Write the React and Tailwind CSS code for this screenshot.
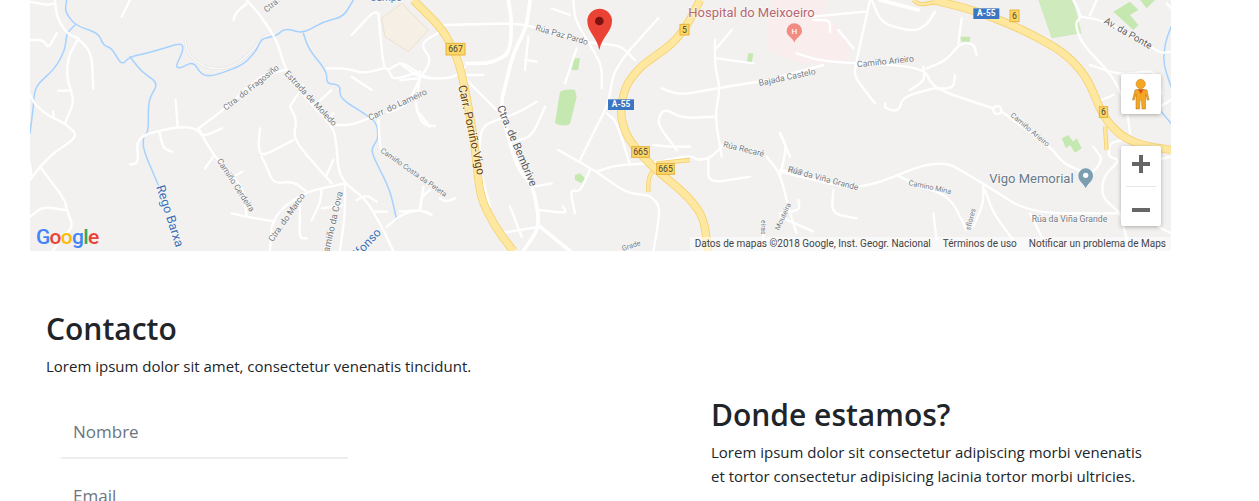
import React from "react";

// map is drawn in 3x units, one group per strip of the picture
const roads1 = [
  "M650 0 L690 45 L740 120 L765 205 L830 300 L910 380 L920 440 L925 510 L945 550 L1010 600 L1060 690 L1090 753",
  "M1045 40 L1060 200 L1075 210 L1115 185 L1165 220 L1200 235",
  "M890 205 L950 205 L1000 220 L1060 205",
  "M1075 210 L1090 240 L1170 215",
  "M965 230 L1025 270",
  "M1045 40 L1030 35 L965 105",
  "M915 375 L965 375 L1030 350 L1130 320 L1170 235",
  "M1045 360 L1050 445 L1060 450",
  "M1160 330 L1200 380",
  "M505 385 L580 330 L650 265 L700 225 L765 210",
  "M300 493 L325 490 L320 410 L440 380 L505 385 L550 465 L610 530 L640 570 L650 650",
  "M437 300 L443 380",
  "M388 395 L400 445 L425 455",
  "M505 385 L520 410 L575 385",
  "M550 470 L525 505",
  "M610 530 L637 515",
  "M605 640 L650 650 L735 665",
  "M720 753 L725 670 L760 620 L830 575 L945 550",
  "M780 320 L820 255",
  "M780 320 L800 360 L790 420 L905 550",
  "M790 420 L695 470 L685 440 L690 385",
  "M695 470 L710 500 L730 550 L790 545 L830 575",
  "M910 480 L890 525",
  "M905 270 L860 310",
  "M910 340 L890 360",
  "M810 615 L808 715 L830 715",
  "M875 570 L870 610 L845 660",
  "M945 550 L945 640 L930 753",
  "M875 625 L940 615",
  "M980 600 L1010 585 L1040 605",
  "M1030 635 L1070 635",
  "M1070 680 L1120 640 L1170 630 L1200 640",
  "M1170 630 L1175 590 L1200 570",
  "M75 0 L80 50 L110 100 L145 115 L185 160 L190 265",
  "M145 115 L115 170 L110 230 L125 280 L130 310 L105 370",
  "M85 272 L125 272",
  "M0 120 L40 120 L55 145 L80 100",
  "M0 285 L20 320 L60 350 L105 370 L145 408 L70 460 L30 500 L0 540",
  "M70 335 L70 350",
  "M30 500 L105 600 L110 630 L130 680 L90 720 L70 750",
  "M0 650 L40 620 L105 630",
  "M0 490 L5 530",
  "M0 5 L50 15 L75 10",
  "M300 0 L275 50",
  "M650 10 L620 35 L610 60",
];

const rivers1 = [
  "M110 0 L105 35 L135 75 L205 100 L220 135 L245 145 L275 195 L300 170 L370 155 L455 128 L460 150 L437 200 L450 205 L490 185 L515 225 L550 228 L640 195 L680 150 L695 115 L735 110 L765 85 L820 100 L880 65 L940 50 L970 0",
  "M135 75 L110 100 L105 150 L75 205 L15 260 L10 320 L0 400",
  "M300 170 L335 215 L385 250 L355 300 L355 395 L340 410 L340 450 L385 555",
  "M820 100 L835 145 L890 215 L890 250 L930 255 L930 295 L1010 345 L1040 370 L1045 415 L1025 445 L1030 470 L1080 570 L1100 660",
];

const roads2 = [
  "M130 75 L340 70 L400 80 L570 130 L660 135 L705 180",
  "M775 55 L680 160 L640 220 L625 310 L580 400 L540 480",
  "M620 340 L650 365 L690 495",
  "M475 450 L590 515 L680 580 L750 585 L780 620 L770 700 L760 753",
  "M590 515 L650 495 L760 490 L870 465 L890 480 L930 475 L970 435",
  "M570 510 L540 575 L510 570 L525 640",
  "M760 435 L810 440 L870 440",
  "M520 0 L525 60 L580 150 L605 200 L605 265",
  "M455 25 L510 45",
  "M530 145 L495 250",
  "M410 305 L350 340 L260 370 L240 400 L240 510 L270 620",
  "M435 320 L395 410 L340 425",
  "M200 240 L290 330",
  "M200 225 L250 225",
  "M375 210 L385 110",
  "M375 180 L410 185",
  "M0 190 L60 235 L160 235 L195 200",
  "M0 240 L60 235",
  "M60 235 L45 320 L70 375 L105 378",
  "M130 90 L60 130 L95 180 L60 235",
  "M60 630 L70 560",
  "M0 635 L60 630 L95 645",
  "M120 595 L140 605 L165 595",
  "M330 620 L365 710",
  "M300 700 L420 680",
  "M420 630 L500 640 L490 620",
  "M400 560 L455 550",
  "M785 265 L840 285 L950 265 L1200 225",
  "M945 120 L945 200 L960 265 L945 350 L965 470",
  "M995 90 L945 150",
  "M950 175 L1060 190",
  "M945 350 L850 355 L790 325 L770 370 L830 450",
  "M1140 400 L1170 470",
  "M1100 470 L1140 520 L1170 640 L1190 700",
  "M925 480 L925 550 L1050 530",
  "M1140 510 L1200 520",
  "M1085 660 L1095 753",
  "M1000 445 L970 435",
];

const thick2 = [
  "M325 0 L335 60 L330 160 L270 190 L200 190",
  "M390 0 L380 80 L340 160 L320 240 L300 320 L350 500 L400 560 L420 680 L370 753",
  "M420 680 L510 753",
];

const roads3 = [
  "M270 0 L230 180 L222 230 L285 310",
  "M275 0 L305 70 L400 95 L440 75 L465 35",
  "M100 50 L255 35",
  "M100 60 L150 60 L150 95",
  "M175 90 L220 145",
  "M50 160 L130 185 L430 200 L460 265 L640 325",
  "M130 195 L0 230",
  "M440 205 L500 180 L540 130 L580 130 L590 165",
  "M545 55 L535 130",
  "M430 200 L435 240 L390 270",
  "M525 225 L520 265 L460 265",
  "M460 265 L370 290 L355 335 L315 325 L315 310",
  "M665 335 L810 440 L850 490 L920 520",
  "M0 400 L20 440 L0 530",
  "M0 515 L100 540 L240 570 L480 475 L600 545 L750 640 L1020 640",
  "M350 525 L400 550 L510 590 L560 690",
  "M610 555 L610 610 L580 680",
  "M615 570 L640 640 L700 720",
  "M160 570 L155 640 L230 655",
  "M0 640 L60 630 L55 600",
  "M0 650 L100 695",
  "M460 640 L470 720",
  "M750 640 L790 720",
  "M880 0 L905 50 L885 70 L905 130 L1000 230 L1040 320 L1050 400",
  "M905 50 L960 60 L1080 115 L1140 160 L1173 155",
  "M930 195 L1020 225 L1130 210 L1145 280",
  "M965 300 L1000 285",
  "M940 440 L970 480 L925 530",
  "M1025 420 L990 430 L985 470 L1020 480 L970 530 L965 590 L1020 640",
  "M1020 640 L1050 753",
  "M1130 480 L1173 470",
  "M1173 300 L1140 320",
  "M1135 680 L1173 700",
  "M950 0 L930 45",
  "M1160 10 L1173 25",
];

// rounds the corners of a polyline, so roads don't look like they were ruled
const smooth = (d) => {
  const n = d.match(/-?\d+(\.\d+)?/g).map(Number);
  const pts = [];
  for (let i = 0; i < n.length; i += 2) pts.push([n[i], n[i + 1]]);
  let out = `M${pts[0][0]} ${pts[0][1]}`;
  for (let i = 1; i < pts.length - 1; i++) {
    const [px, py] = pts[i - 1];
    const [x, y] = pts[i];
    const [nx, ny] = pts[i + 1];
    const ax = x + (px - x) * 0.4;
    const ay = y + (py - y) * 0.4;
    const bx = x + (nx - x) * 0.4;
    const by = y + (ny - y) * 0.4;
    out += ` L${ax} ${ay} Q${x} ${y} ${bx} ${by}`;
  }
  const last = pts[pts.length - 1];
  return `${out} L${last[0]} ${last[1]}`;
};

const Lines = ({ items, color = "#fff", width = 7 }) => (
  <g fill="none" stroke={color} strokeWidth={width} strokeLinecap="round" strokeLinejoin="round">
    {items.map((d) => (
      <path key={d} d={smooth(d)} />
    ))}
  </g>
);

// yellow main road, outline first and then the fill
const Motorway = ({ d, width = 20 }) => (
  <g fill="none" strokeLinejoin="round">
    <path d={smooth(d)} stroke="#f6d06f" strokeWidth={width + 5} />
    <path d={smooth(d)} stroke="#fee8a0" strokeWidth={width} />
  </g>
);

const Label = ({ x, y, angle = 0, size = 25, color = "#757a80", weight = 400, children }) => (
  <text
    x={x}
    y={y}
    transform={`rotate(${angle} ${x} ${y})`}
    fontSize={size}
    fill={color}
    fontWeight={weight}
    fontFamily="Roboto, sans-serif"
    stroke="#fff"
    strokeOpacity="0.6"
    strokeWidth="4"
    paintOrder="stroke"
  >
    {children}
  </text>
);

const Shield = ({ x, y, w, h, children }) => (
  <g>
    <rect x={x} y={y} width={w} height={h} fill="#fdd663" stroke="#e3b23c" strokeWidth="3" />
    <text x={x + w / 2} y={y + h / 2 + 9} textAnchor="middle" fontSize="26" fill="#444" fontFamily="Roboto, sans-serif">
      {children}
    </text>
  </g>
);

const BlueShield = ({ x, y }) => (
  <g>
    <rect x={x} y={y} width="78" height="32" fill="#3a76c4" />
    <text x={x + 39} y={y + 24} textAnchor="middle" fontSize="25" fontWeight="700" fill="#fff" fontFamily="Roboto, sans-serif">
      A-55
    </text>
  </g>
);

const MapDrawing = () => (
  <svg viewBox="0 0 3423 753" className="block w-full h-full">
    <rect width="3423" height="753" fill="#f2f1f0" />

    {/* hospital ground */}
    <path d="M2210 60 L2210 150 L2310 190 L2455 190 L2460 130 L2385 40 L2385 0 L2230 0 Z" fill="#f9eded" />

    <g>
      <path d="M1055 55 L1115 10 L1195 90 L1135 155 L1065 110 Z" fill="#f5efe6" stroke="#eee0cf" strokeWidth="3" />
      <path d={smooth("M465 120 L475 165 L530 205 L600 205 L660 160 L700 110 L730 100")} fill="none" stroke="#e4e3e2" strokeWidth="9" />
      <path d={smooth("M465 120 L475 165 L530 205 L600 205 L660 160 L700 110 L730 100")} fill="none" stroke="#f8f8f8" strokeWidth="5" />
      <Lines items={rivers1} color="#a6d2ff" width={4.5} />
      <Lines items={roads1} />
    </g>

    <g transform="translate(1110 0)">
      <path d="M480 275 Q500 265 525 270 L530 290 L510 372 Q490 382 465 370 Z" fill="#c5e8b0" />
      <path d="M520 175 L540 175 L535 210 L515 210 Z" fill="#c5e8b0" />
      <path d="M1045 160 L1060 160 L1055 190 L1040 190 Z" fill="#c5e8b0" />
      <path d="M525 525 L540 520 L555 535 L545 550 L525 540 Z" fill="#c5e8b0" />
      <Lines items={roads2} />
      <Lines items={thick2} width={11} />
      <Motorway d="M40 0 L130 90 L175 180 L200 290 L225 440 L240 590 L285 680 L340 753" />
      <Motorway d="M770 490 L870 480" width={8} />
      <Motorway d="M760 510 L745 535 L745 575" width={8} />
      <Motorway d="M900 0 L865 70 L820 130 L720 200 L675 260 L660 340 L680 410 L745 490 L860 585 L910 650 L925 753" />
    </g>

    <g transform="translate(2250 0)">
      <path d="M775 0 L880 0 L905 100 L815 115 Z" fill="#c5e8b0" opacity="0.8" />
      <path d="M1000 35 L1050 5 L1075 30 L1050 45 L1075 75 L1060 90 Z" fill="#c5e8b0" />
      <path d="M1080 0 L1125 0 L1100 25 Z" fill="#c5e8b0" />
      <path d="M540 110 L570 110 L570 125 L545 125 Z" fill="#c5e8b0" />
      <path d="M845 415 L865 405 L880 425 L890 415 L905 445 L885 458 L870 435 L858 445 Z" fill="#c5e8b0" />
      <Lines items={["M1173 80 L1155 130 L1150 190 L1173 260", "M1140 330 L1173 370"]} color="#a6d2ff" width={4.5} />
      <Lines items={roads3} />
      <Lines items={["M300 0 L415 30"]} width={11} />
      <circle cx="652" cy="330" r="12" fill="#f2f1f0" stroke="#fff" strokeWidth="7" />
      <Motorway d="M975 380 L980 450" width={8} />
      <Motorway d="M400 0 L420 15 L500 0" width={8} />
      <Motorway d="M460 0 L580 30 L720 85 L850 155 L920 230 L970 350 L1020 405 L1080 435 L1173 450" />
    </g>

    {/* labels, shields and pins go over all the road strips */}
    <g>
      <Label x={710} y={38} angle={-40}>Ctra.</Label>
      <Label x={588} y={332} angle={-38}>Ctra. do Fragosiño</Label>
      <Label x={762} y={222} angle={47} size={26}>Estrada de Moledo</Label>
      <Label x={1020} y={362} angle={-25} size={26}>Carr. do Lameiro</Label>
      <Label x={1050} y={455} angle={35} size={22}>Camiño Costa da Peteta</Label>
      <Label x={560} y={482} angle={57}>Camiño Cerdeira</Label>
      <Label x={728} y={727} angle={-55} size={26}>Ctra. do Marco</Label>
      <Label x={893} y={775} angle={-77} size={28}>Camiño da Cova</Label>
      <Label x={970} y={790} angle={-47} size={36} color="#3b6fb6">Alfonso</Label>
      <Label x={378} y={560} angle={72} size={38} color="#3b6fb6">Rego Barxa</Label>
      <Label x={1020} y={3} size={30} color="#5b7fae">Campo</Label>
    </g>

    <g transform="translate(1110 0)">
      <Shield x={138} y={130} w={57} h={35}>667</Shield>
      <Shield x={840} y={73} w={27} h={32}>5</Shield>
      <Shield x={695} y={440} w={53} h={32}>665</Shield>
      <Shield x={770} y={490} w={53} h={33}>665</Shield>
      <BlueShield x={624} y={298} />
      <Label x={405} y={90} angle={16}>Rúa Paz Pardo</Label>
      <Label x={175} y={258} angle={78} size={35} color="#6b3e00">Carr. Porriño-Vigo</Label>
      <Label x={290} y={322} angle={67} size={33} color="#555a60">Ctra. de Bembrive</Label>
      <Label x={968} y={440} angle={14}>Rúa Recaré</Label>
      <Label x={1165} y={515} angle={10}>Rúa</Label>
      <Label x={1078} y={258} angle={-12} size={26}>Bajada Castelo</Label>
      <Label x={1137} y={692} angle={-65} size={22}>Mouteira</Label>
      <Label x={1082} y={660} angle={90} size={20}>eiras</Label>
      <Label x={668} y={753} angle={-18} size={22}>Grade</Label>
      <Label x={865} y={50} size={39} color="#b8666f">Hospital do Meixoeiro</Label>
      <path d="M598 150 C590 110 562 95 562 63 A37 37 0 1 1 636 63 C636 95 606 110 598 150 Z" fill="#ea4335" />
      <circle cx="598" cy="63" r="13" fill="#7a1210" />
    </g>

    <g transform="translate(2250 0)">
      <BlueShield x={580} y={25} />
      <Shield x={690} y={30} w={27} h={35}>6</Shield>
      <Shield x={958} y={320} w={25} h={32}>6</Shield>
      <path d="M43 128 C38 112 20 108 20 93 A23 23 0 1 1 66 93 C66 108 48 112 43 128 Z" fill="#f28b82" />
      <text x="43" y="102" textAnchor="middle" fontSize="24" fontWeight="500" fill="#fff" fontFamily="Roboto, sans-serif">H</text>
      <Label x={232} y={202} angle={-6} size={26}>Camiño Arieiro</Label>
      <Label x={690} y={348} angle={40} size={22}>Camiño Arieiro</Label>
      <Label x={970} y={68} angle={30} size={29} color="#555a60">Av. da Ponte</Label>
      <Label x={22} y={515} angle={15}>Rúa da Viña Grande</Label>
      <Label x={385} y={555} angle={12} size={22}>Camino Mina</Label>
      <Label x={755} y={665} size={26}>Rúa da Viña Grande</Label>
      <Label x={570} y={692} angle={-75} size={22}>sflores</Label>
      <Label x={628} y={550} size={39} color="#667a88">Vigo Memorial</Label>
      <path d="M917 565 C912 550 895 545 895 527 A22 22 0 1 1 939 527 C939 545 922 550 917 565 Z" fill="#7b9eb0" />
      <circle cx="917" cy="526" r="8" fill="#fff" />
    </g>
  </svg>
);

const Pegman = () => (
  <svg viewBox="0 0 40 40" className="w-10 h-10">
    <circle cx="19.7" cy="10" r="4.7" fill="#f5a623" stroke="#c9871a" strokeWidth="0.5" />
    <path
      d="M14 16 Q19.7 14 26 16 L28 26 L26.3 26 L24.5 20 L24.5 35 L21 35 L20.5 26 L19 26 L18.5 35 L15 35 L15 20 L13.2 26 L11.5 26 Z"
      fill="#f5a623"
      stroke="#a8741c"
      strokeWidth="0.5"
    />
    <path d="M17 15.5 L19.8 20 L22.6 15.5 Z" fill="#d9541e" />
  </svg>
);

const ZoomPlus = () => (
  <svg viewBox="0 0 18 18" className="w-[18px] h-[18px]">
    <path d="M7 0 H11 V7 H18 V11 H11 V18 H7 V11 H0 V7 H7 Z" fill="#666" />
  </svg>
);

const ZoomMinus = () => (
  <svg viewBox="0 0 18 4" className="w-[18px] h-1">
    <rect width="18" height="4" fill="#666" />
  </svg>
);

const GoogleLogo = () => (
  <div className="absolute left-[6px] bottom-[1px] text-[21px] leading-[26px] font-medium tracking-[-0.7px] font-['Roboto',sans-serif]">
    <span className="text-[#4285f4]">G</span>
    <span className="text-[#ea4335]">o</span>
    <span className="text-[#fbbc05]">o</span>
    <span className="text-[#4285f4]">g</span>
    <span className="text-[#34a853]">l</span>
    <span className="text-[#ea4335]">e</span>
  </div>
);

const MapBlock = () => (
  <div className="relative ml-[30px] w-[1141px] h-[251px] overflow-hidden">
    <MapDrawing />
    <GoogleLogo />
    <div className="absolute right-0 bottom-0 h-[14px] flex text-[10px] leading-[14px] text-[#444] font-['Roboto',sans-serif]">
      <span className="bg-white/50 pl-[5px] pr-[6px]">Datos de mapas ©2018 Google, Inst. Geogr. Nacional</span>
      <span className="bg-white/50 px-[6px]">Términos de uso</span>
      <span className="bg-white/50 pl-[6px] pr-[5px]">Notificar un problema de Maps</span>
    </div>
    <div className="absolute left-[1091px] top-[74px] w-10 h-10 bg-white rounded-[2px] shadow-[0_1px_4px_rgba(0,0,0,0.3)]">
      <Pegman />
    </div>
    <div className="absolute left-[1091px] top-[146px] w-10 h-20 bg-white rounded-[2px] shadow-[0_1px_4px_rgba(0,0,0,0.3)] flex flex-col items-center">
      <div className="h-10 w-full flex items-center justify-center pb-1">
        <ZoomPlus />
      </div>
      <div className="w-[30px] h-px bg-[#e6e6e6]" />
      <div className="flex-1 flex items-center justify-center pt-[6px]">
        <ZoomMinus />
      </div>
    </div>
  </div>
);

const Field = ({ placeholder }) => (
  <input
    placeholder={placeholder}
    className="block w-[287px] h-[54px] mb-[10px] px-3 border-b-2 border-[#eee] text-[17px] outline-none placeholder:text-[#6c757d]"
  />
);

export default function App() {
  return (
    <div className="h-[501px] overflow-hidden bg-white text-[#212529] font-['Open_Sans',sans-serif]">
      <MapBlock />
      <div className="ml-[30px] w-[1141px] grid grid-cols-[665px_476px] pt-[59px]">
        <div className="px-4">
          <h2 className="text-[30px] leading-[38px] font-semibold mb-[6px]">Contacto</h2>
          <p className="text-[15px] leading-6">Lorem ipsum dolor sit amet, consectetur venenatis tincidunt.</p>
          <form className="mt-[27px] ml-[15px]">
            <Field placeholder="Nombre" />
            <Field placeholder="Email" />
          </form>
        </div>
        <div className="px-4 pt-[86px]">
          <h2 className="text-[30px] leading-[38px] font-semibold mb-[6px]">Donde estamos?</h2>
          <p className="text-[15px] leading-6">
            Lorem ipsum dolor sit consectetur adipiscing morbi venenatis et tortor consectetur adipisicing lacinia tortor morbi ultricies.
          </p>
        </div>
      </div>
    </div>
  );
}
